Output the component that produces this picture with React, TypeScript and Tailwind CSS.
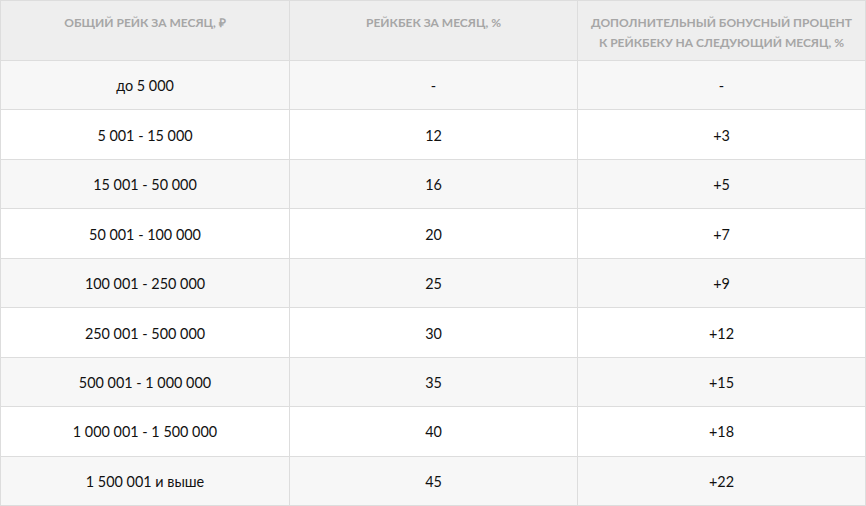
import React from "react";

const rows: [string, string, string][] = [
  ["до 5 000", "-", "-"],
  ["5 001 - 15 000", "12", "+3"],
  ["15 001 - 50 000", "16", "+5"],
  ["50 001 - 100 000", "20", "+7"],
  ["100 001 - 250 000", "25", "+9"],
  ["250 001 - 500 000", "30", "+12"],
  ["500 001 - 1 000 000", "35", "+15"],
  ["1 000 001 - 1 500 000", "40", "+18"],
  ["1 500 001 и выше", "45", "+22"],
];

export default function App() {
  return (
    <div
      className="w-[866px] h-[506px] overflow-hidden bg-white border-t border-l border-[#dddddd]"
      style={{ fontFamily: "Lato, 'Open Sans', sans-serif" }}
    >
      <div className="grid grid-cols-[289px_288px_288px] h-[60px] bg-[#eeeeee]">
        <div className="border-r border-b border-[#dddddd] pt-[12px] px-2 text-center text-[12px] leading-[20px] font-bold uppercase text-[#a6a6a6]">
          Общий рейк за месяц, ₽
        </div>
        <div className="border-r border-b border-[#dddddd] pt-[12px] px-2 text-center text-[12px] leading-[20px] font-bold uppercase text-[#a6a6a6]">
          Рейкбек за месяц, %
        </div>
        <div className="border-r border-b border-[#dddddd] pt-[12px] px-2 text-center text-[12px] leading-[20px] font-bold uppercase text-[#a6a6a6]">
          Дополнительный бонусный процент
          <br />к рейкбеку на следующий месяц, %
        </div>
      </div>
      {rows.map((r, i) => (
        <div
          key={i}
          className={`grid grid-cols-[289px_288px_288px] h-[49.44px] ${i % 2 === 0 ? "bg-[#f7f7f7]" : "bg-white"}`}
        >
          {r.map((c, j) => (
            <div
              key={j}
              className="border-r border-b border-[#dddddd] flex items-center justify-center pt-[2px] text-[14.4px] text-[#111111]"
            >
              {c}
            </div>
          ))}
        </div>
      ))}
    </div>
  );
}
